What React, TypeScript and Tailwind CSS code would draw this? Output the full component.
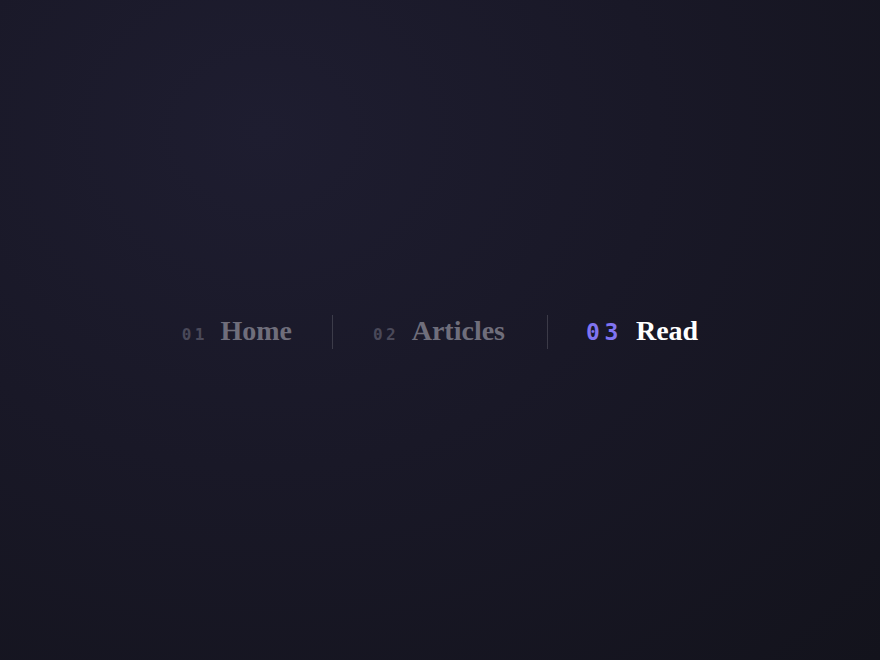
const items = [
  { num: "01", label: "Home", pad: "pr-10" },
  { num: "02", label: "Articles", pad: "pl-10 pr-[42px]" },
  { num: "03", label: "Read", pad: "pl-[38px]", active: true },
];

export default function App() {
  return (
    <div className="flex min-h-screen items-center justify-center bg-[radial-gradient(ellipse_at_30%_20%,#1e1d30_0%,#191827_45%,#13131c_100%)]">
      <nav className="flex items-center pt-1">
        {items.map((item, i) => (
          <div key={item.num} className="flex items-center">
            {i > 0 ? <span className="h-[34px] w-px bg-white/15" /> : null}
            <a href="#" className={`flex items-baseline gap-[13px] ${item.pad}`}>
              <span
                className={
                  item.active
                    ? "font-['DejaVu_Sans_Mono',monospace] text-[23px] font-bold tracking-[0.2em] text-[#8074f2]"
                    : "font-['DejaVu_Sans_Mono',monospace] text-[16px] font-bold tracking-[0.2em] text-[#4a4959]"
                }
              >
                {item.num}
              </span>
              <span
                className={`font-['Liberation_Serif',serif] text-[28px] font-bold leading-none ${item.active ? "text-white" : "text-[#6f6e7b]"}`}
              >
                {item.label}
              </span>
            </a>
          </div>
        ))}
      </nav>
    </div>
  );
}
